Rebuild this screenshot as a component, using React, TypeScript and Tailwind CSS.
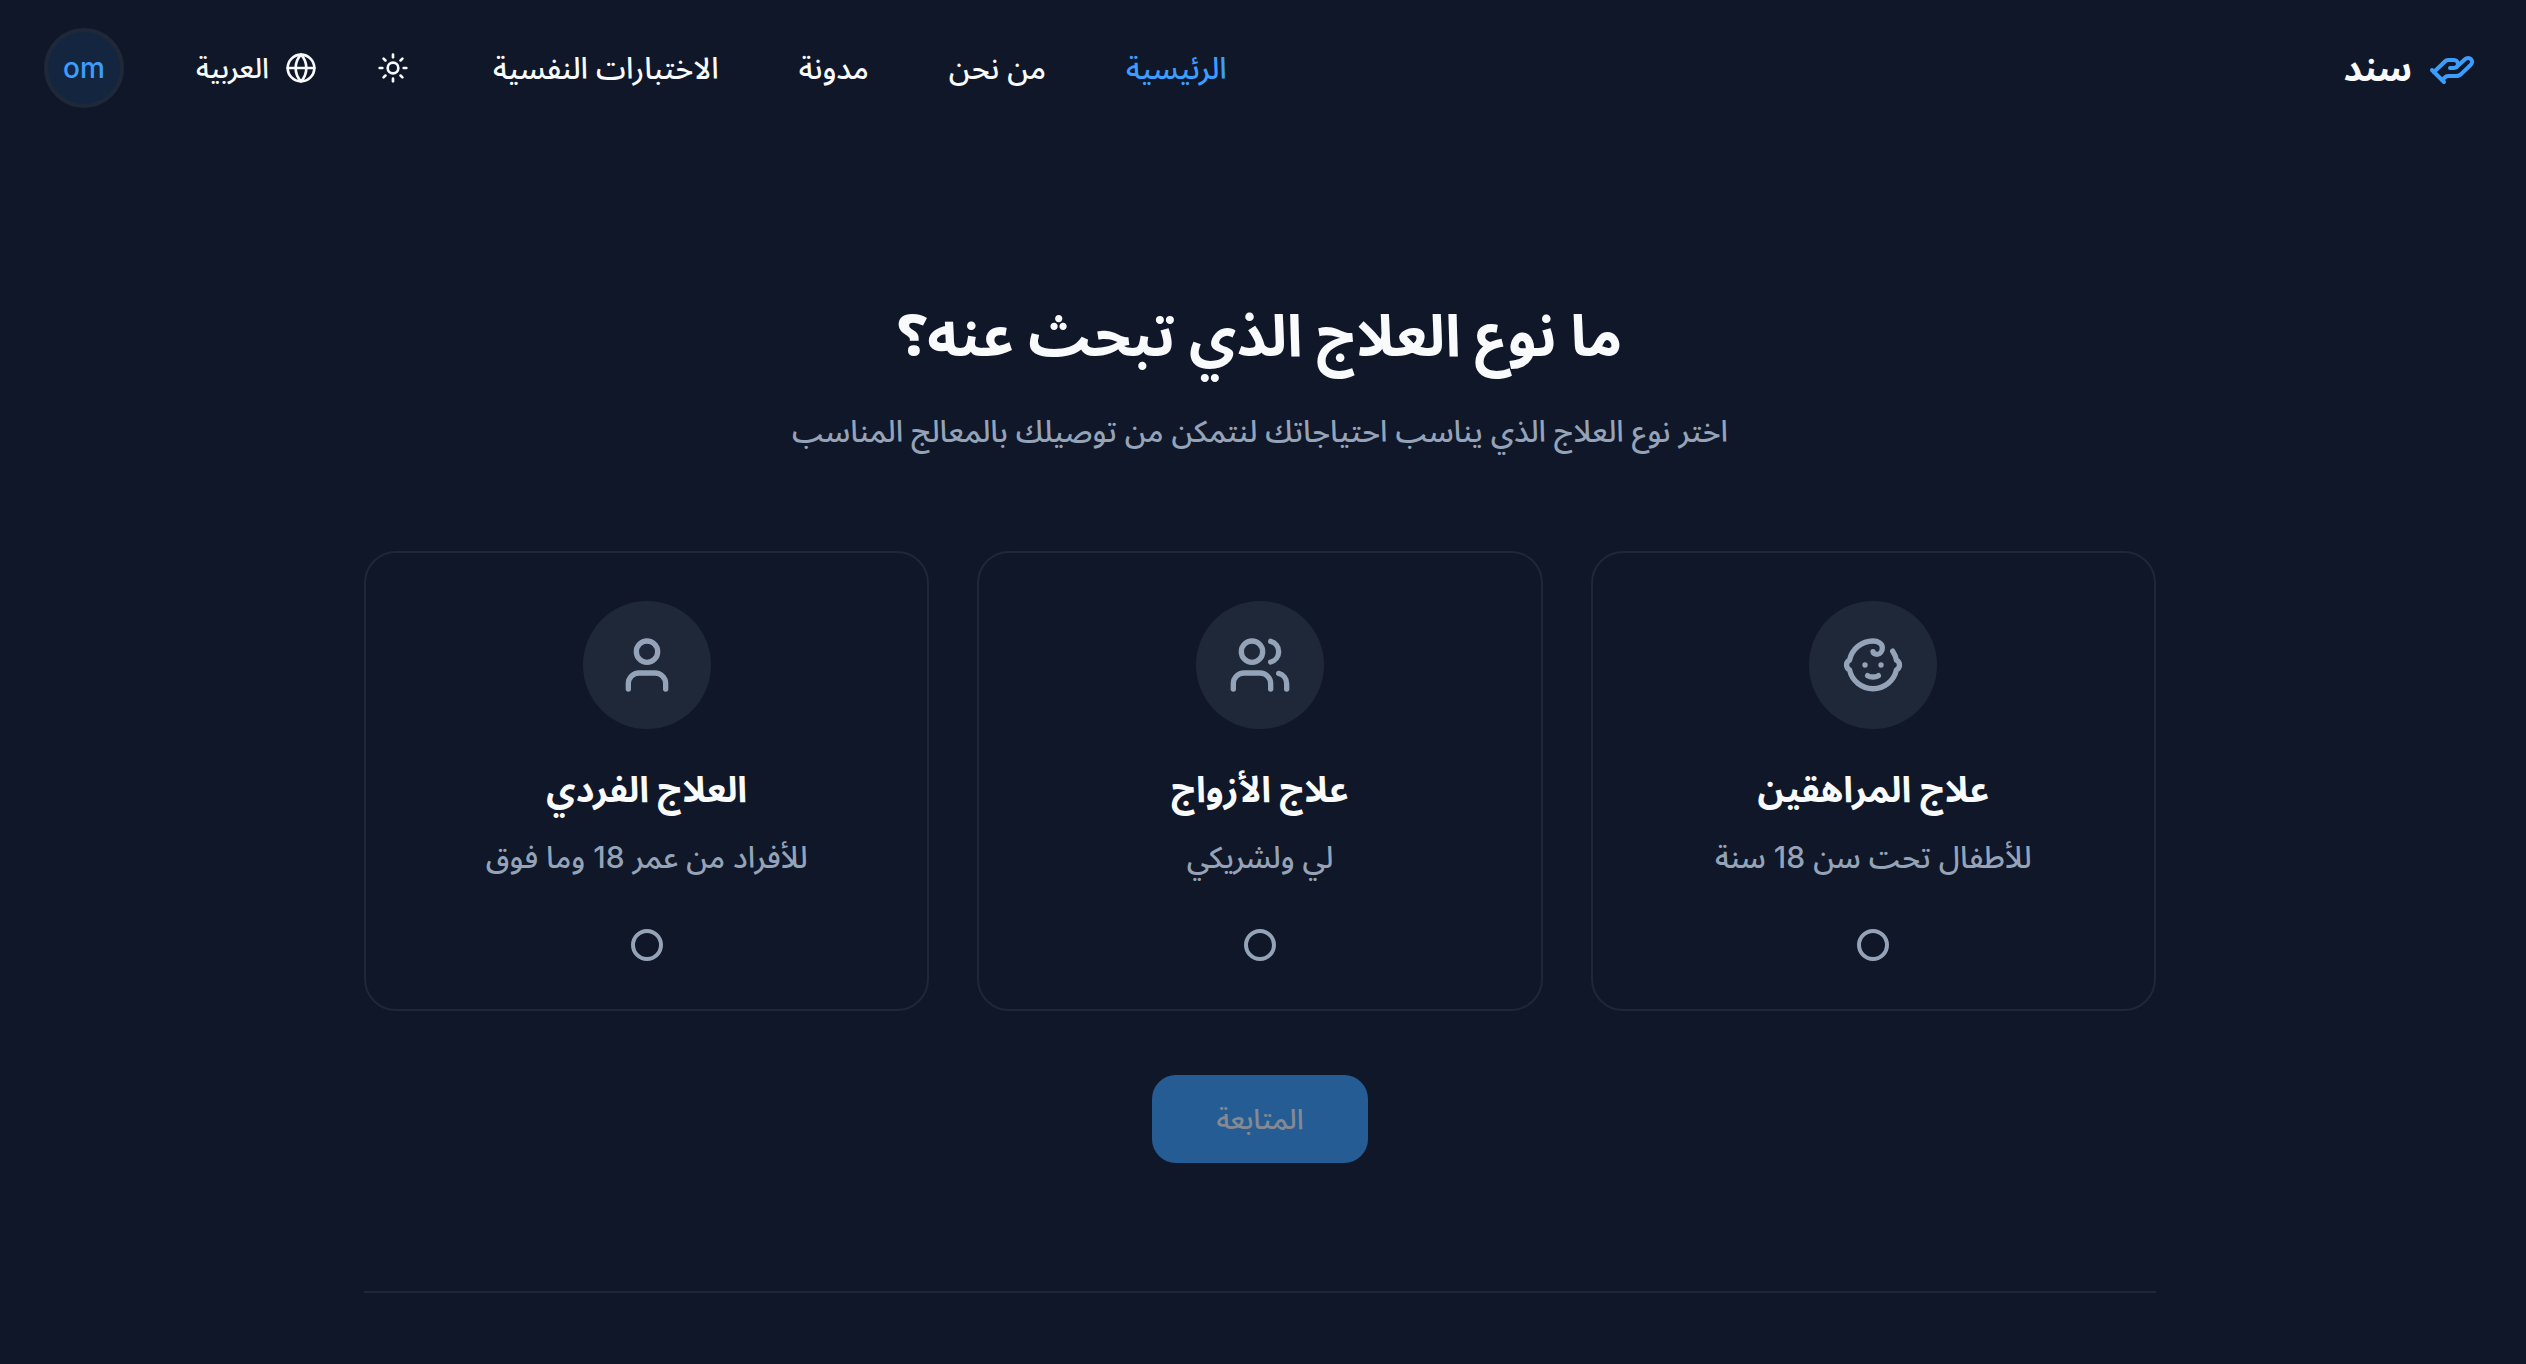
import React, { useState } from "react";
import { Baby, Globe, HandHelping, Sun, User, Users } from "lucide-react";
import type { LucideIcon } from "lucide-react";

type TherapyType = {
  id: string;
  title: string;
  description: string;
  icon: LucideIcon;
};

const navLinks = [
  { label: "الرئيسية", href: "#home", active: true },
  { label: "من نحن", href: "#about", active: false },
  { label: "مدونة", href: "#blog", active: false },
  { label: "الاختبارات النفسية", href: "#tests", active: false },
];

const therapyTypes: TherapyType[] = [
  {
    id: "teen",
    title: "علاج المراهقين",
    description: "للأطفال تحت سن 18 سنة",
    icon: Baby,
  },
  {
    id: "couples",
    title: "علاج الأزواج",
    description: "لي ولشريكي",
    icon: Users,
  },
  {
    id: "individual",
    title: "العلاج الفردي",
    description: "للأفراد من عمر 18 وما فوق",
    icon: User,
  },
];

function Header() {
  return (
    <header className="flex items-center justify-between px-11 py-7">
      {/* Logo */}
      <a href="#home" className="flex items-center gap-4">
        <HandHelping className="size-12 text-[#3b9eff]" />
        <span className="text-[36px] leading-12 font-bold">سند</span>
      </a>

      <div className="flex items-center">
        <nav className="flex items-center gap-20 ml-15">
          {navLinks.map((link) => (
            <a
              key={link.href}
              href={link.href}
              className={
                link.active
                  ? "text-[30px] leading-10 font-medium text-[#3b9eff]"
                  : "text-[30px] leading-10 font-medium"
              }
            >
              {link.label}
            </a>
          ))}
        </nav>

        <button
          type="button"
          aria-label="المظهر"
          className="flex size-20 items-center justify-center rounded-full"
        >
          <Sun className="size-8" />
        </button>

        <button
          type="button"
          className="flex h-20 items-center gap-4 pr-9 pl-18 text-[28px] leading-8 font-medium"
        >
          <Globe className="size-8" />
          العربية
        </button>

        {/* User avatar */}
        <button
          type="button"
          className="flex size-20 items-center justify-center rounded-full border-4 border-[#1f2838] bg-[#14263f] text-[28px] leading-10 font-medium text-[#3b9eff]"
        >
          om
        </button>
      </div>
    </header>
  );
}

function TherapyCard({
  type,
  checked,
  onSelect,
}: {
  type: TherapyType;
  checked: boolean;
  onSelect: () => void;
}) {
  const Icon = type.icon;

  return (
    <label
      htmlFor={type.id}
      className="flex flex-1 cursor-pointer flex-col items-center rounded-[32px] border-2 border-[#1e2838] p-12 text-center"
    >
      <span className="flex size-32 items-center justify-center rounded-full bg-[#1f2838]">
        <Icon className="size-16 text-[#94a3b8]" />
      </span>
      <span className="mt-8 text-[36px] leading-14 font-bold">{type.title}</span>
      <span className="mt-4 text-[30px] leading-12 font-medium text-[#94a3b8]">
        {type.description}
      </span>
      <input
        id={type.id}
        type="radio"
        name="therapy"
        checked={checked}
        onChange={onSelect}
        className="mt-12 size-8 appearance-none rounded-full border-4 border-[#94a3b8] checked:bg-[#3b9eff]"
      />
    </label>
  );
}

export default function App() {
  const [selected, setSelected] = useState<string | null>(null);

  return (
    <div
      dir="rtl"
      className="min-h-screen bg-[#101728] pr-[6px] font-['Inter','Noto_Sans_Arabic','DejaVu_Sans',sans-serif] text-[#f8fafc]"
    >
      <Header />

      <main className="mx-auto max-w-[1792px] pt-[163px]">
        <div className="text-center">
          <h1 className="text-[58px] leading-18 font-bold">
            ما نوع العلاج الذي تبحث عنه؟
          </h1>
          <p className="mt-7 text-[30px] leading-16 font-medium text-[#94a3b8]">
            اختر نوع العلاج الذي يناسب احتياجاتك لنتمكن من توصيلك بالمعالج المناسب
          </p>
        </div>

        {/* Therapy options */}
        <div className="mt-22 flex gap-12">
          {therapyTypes.map((type) => (
            <TherapyCard
              key={type.id}
              type={type}
              checked={selected === type.id}
              onSelect={() => setSelected(type.id)}
            />
          ))}
        </div>

        <div className="mt-16 flex justify-center">
          <button
            type="button"
            disabled={!selected}
            className="h-22 w-54 rounded-3xl bg-[#3ba1ff] text-[28px] leading-8 font-medium disabled:opacity-50"
          >
            المتابعة
          </button>
        </div>

        <hr className="mt-32 border-t-2 border-[#1e2838]" />
      </main>
    </div>
  );
}
